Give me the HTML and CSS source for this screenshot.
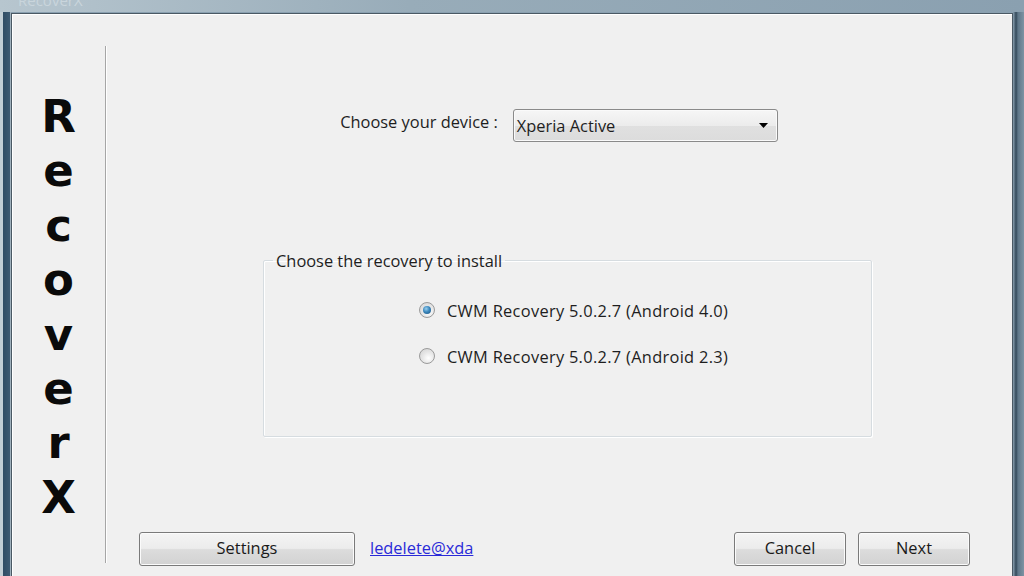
FILE: index.html
```html
<!DOCTYPE html>
<html lang="en">
<head>
<meta charset="utf-8">
<title>RecoverX</title>
<link rel="stylesheet" href="styles.css">
</head>
<body>
<div class="window">
  <div class="titlebar"><span class="title">RecoverX</span></div>
  <div class="frame">
    <div class="client">
      <aside class="sidebar">
        <div class="brand">
          <span>R</span><span>e</span><span>c</span><span>o</span><span>v</span><span>e</span><span>r</span><span>X</span>
        </div>
      </aside>
      <main class="main">
        <div class="device-row">
          <label class="device-label">Choose your device :</label>
          <div class="select">
            <span class="select-value">Xperia Active</span>
            <svg class="select-arrow" width="9" height="5" viewBox="0 0 9 5"><path d="M0 0h9L4.5 5z" fill="#000"/></svg>
          </div>
        </div>
        <fieldset class="group">
          <legend class="group-legend">Choose the recovery to install</legend>
          <div class="options">
            <label class="option"><span class="radio checked"></span><span class="option-text">CWM Recovery 5.0.2.7 (Android 4.0)</span></label>
            <label class="option"><span class="radio"></span><span class="option-text">CWM Recovery 5.0.2.7 (Android 2.3)</span></label>
          </div>
        </fieldset>
        <div class="actions">
          <div class="actions-left">
            <button class="btn btn-wide">Settings</button>
            <a class="link" href="#">ledelete@xda</a>
          </div>
          <div class="actions-right">
            <button class="btn">Cancel</button>
            <button class="btn">Next</button>
          </div>
        </div>
      </main>
    </div>
  </div>
</div>
</body>
</html>
```
FILE: styles.css
```css
html, body {
  margin: 0;
  padding: 0;
  width: 1024px;
  height: 576px;
  overflow: hidden;
}
body {
  font-family: "Open Sans", "Noto Sans", "DejaVu Sans", sans-serif;
  color: #1e1e1e;
  background: #8ea3b2;
}
.window {
  width: 1024px;
  height: 576px;
  display: flex;
  flex-direction: column;
  background: linear-gradient(90deg, #b7c6cf 0%, #98acb9 40%, #8aa0b0 100%);
}
.titlebar {
  height: 12px;
  overflow: hidden;
  position: relative;
}
.title {
  position: absolute;
  left: 18px;
  top: -10px;
  font-size: 15px;
  color: #c9d5dc;
}
.frame {
  flex: 1;
  display: flex;
  padding: 0 11px 0 3px;
  background: linear-gradient(90deg, #c2ced5 0px, #c2ced5 3px, #2f4c64 3px, #3d5a72 10px, #9fb1bd 10px, #9fb1bd 11px, transparent 11px), linear-gradient(270deg, #7d93a3 0px, #5f7789 6px, #33495a 8px, #8aa0b0 11px);
}
.client {
  flex: 1;
  margin-left: 8px;
  display: flex;
  border: 1px solid #4a5964;
  border-bottom: none;
  background: #f0f0f0;
  box-shadow: inset 1px 1px 0 #ffffff;
  margin-top: 1px;
}
.sidebar {
  width: 93px;
  margin: 32px 0 13px;
  border-right: 1px solid #a6a6a6;
  box-shadow: 1px 0 0 #ffffff;
  display: flex;
  justify-content: center;
}
.brand {
  display: flex;
  flex-direction: column;
  align-items: center;
  padding-top: 44px;
  padding-left: 0;
  font-family: "DejaVu Sans", Verdana, sans-serif;
  font-weight: bold;
  font-size: 45px;
  line-height: 54.4px;
  color: #0a0a0a;
}
.main {
  flex: 1;
  display: flex;
  flex-direction: column;
  padding: 95px 42px 0 33px;
}
.device-row {
  display: flex;
  align-items: flex-start;
  justify-content: center;
  gap: 15px;
  padding-left: 9px;
}
.device-label {
  font-size: 16.4px;
  line-height: 22px;
  margin-top: 2px;
}
.select {
  width: 251px;
  height: 31px;
  border: 1px solid #8a8a8a;
  border-radius: 3px;
  background: linear-gradient(#f6f6f6, #ececec 50%, #e0e0e0 51%, #dcdcdc);
  box-shadow: inset 0 0 0 1px #fafafa;
  display: flex;
  align-items: center;
  justify-content: space-between;
  padding: 0 9px 0 3px;
  box-sizing: content-box;
}
.select-value {
  font-size: 16.4px;
}
.group {
  margin: 107px 98px 0 124px;
  padding: 26px 0 0;
  height: 160px;
  min-width: 0;
  border: 1px solid #d6dce0;
  border-radius: 2px;
  box-shadow: inset 1px 1px 0 #ffffff, 1px 1px 0 #ffffff;
}
.group-legend {
  font-size: 16.4px;
  padding: 0 3px;
  margin-left: 9px;
}
.options {
  display: flex;
  flex-direction: column;
  align-items: flex-start;
  gap: 22px;
  padding-left: 155px;
}
.option {
  display: flex;
  align-items: center;
  gap: 12px;
  font-size: 16.4px;
  height: 24px;
}
.option-text {
  letter-spacing: 0.3px;
}
.radio {
  width: 16px;
  height: 16px;
  border-radius: 50%;
  border: 1px solid #9a9a9a;
  background: radial-gradient(circle at 60% 65%, #ffffff 0%, #e8e8e8 45%, #cfcfcf 100%);
  display: flex;
  align-items: center;
  justify-content: center;
  box-sizing: border-box;
}
.radio.checked::after {
  content: "";
  width: 8px;
  height: 8px;
  border-radius: 50%;
  background: radial-gradient(circle at 40% 35%, #9ad0f0 0%, #3c88bd 45%, #1a4f7c 100%);
}
.actions {
  margin-top: 95px;
  display: flex;
  justify-content: space-between;
  align-items: center;
}
.actions-left, .actions-right {
  display: flex;
  align-items: center;
  gap: 12px;
}
.actions-left { gap: 15px; }
.btn {
  font-family: inherit;
  font-size: 16.4px;
  color: #1a1a1a;
  width: 112px;
  height: 34px;
  border: 1px solid #7a7a7a;
  border-radius: 3px;
  background: linear-gradient(#f4f4f4 0%, #ececec 48%, #dcdcdc 52%, #d2d2d2 100%);
  box-shadow: inset 0 0 0 1px #fbfbfb;
  padding: 0 0 3px;
}
.btn-wide {
  width: 216px;
}
.link {
  font-size: 16.4px;
  color: #2a2ad8;
  text-decoration: underline;
  margin-top: -3px;
}
```
